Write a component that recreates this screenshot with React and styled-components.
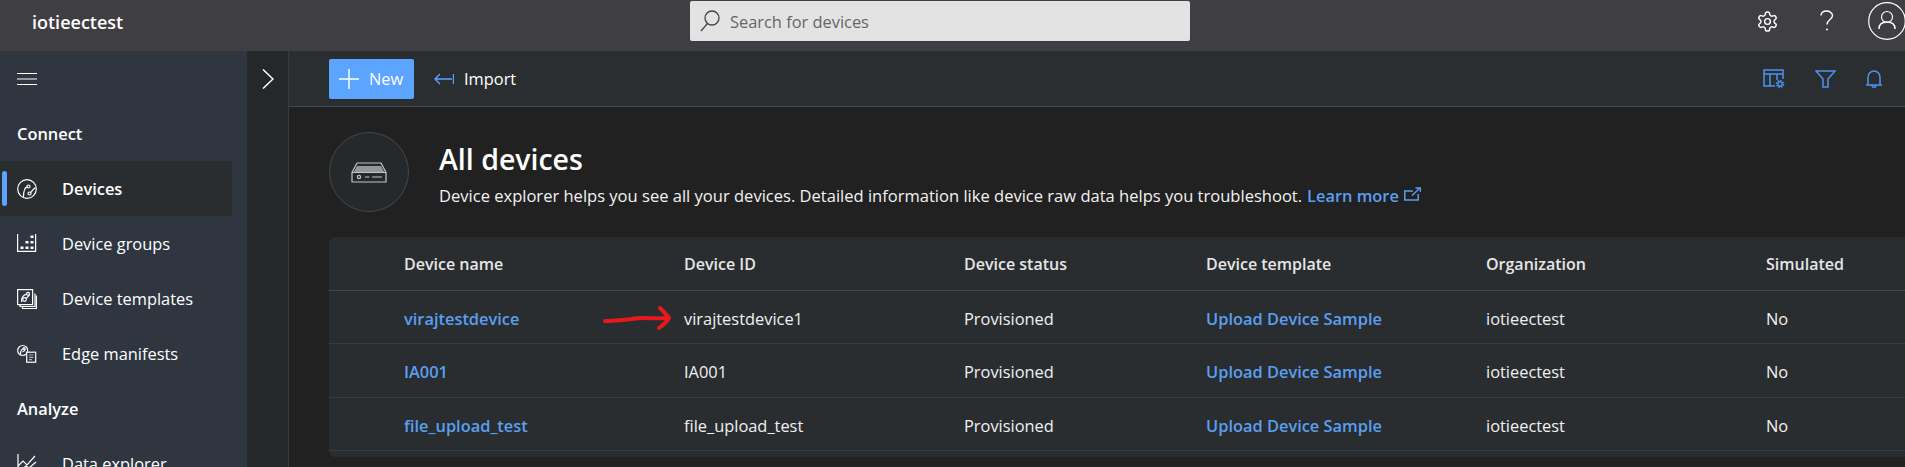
import styled, { createGlobalStyle } from "styled-components";

const GlobalStyle = createGlobalStyle`
  html, body {
    margin: 0;
    padding: 0;
    background: #212121;
  }
  * {
    box-sizing: border-box;
  }
`;

const Page = styled.div`
  width: 1905px;
  height: 467px;
  overflow: hidden;
  display: grid;
  grid-template-rows: 51px 1fr;
  font-family: "Open Sans", "Liberation Sans", sans-serif;
  font-size: 16.4px;
  color: #f2f2f2;
`;

const TopBar = styled.header`
  display: grid;
  grid-template-columns: 690px 500px 1fr;
  align-items: start;
  background: #3f3e43;
`;

const Brand = styled.div`
  padding: 10px 0 0 32px;
  font-size: 18px;
  line-height: 24px;
  font-weight: 600;
  color: #fff;
`;

const Search = styled.div`
  height: 40px;
  margin-top: 1px;
  display: flex;
  align-items: center;
  gap: 10px;
  padding-left: 10px;
  background: #e3e3e3;
  border-radius: 2px;
  color: #666;
`;

const TopIcons = styled.div`
  display: flex;
  align-items: center;
  justify-content: flex-end;
  height: 42px;
  margin-right: -12px;
`;

const TopIcon = styled.div`
  width: 60px;
  display: flex;
  justify-content: center;
  color: #fff;
`;

const Body = styled.div`
  display: grid;
  grid-template-columns: 248px 41px 1fr;
  min-height: 0;
`;

const Sidebar = styled.nav`
  background: #2f3640;
  border-right: 1px solid #24272a;
`;

const Burger = styled.div`
  height: 55px;
  padding-left: 17px;
  display: flex;
  align-items: center;
  color: #fff;
`;

const Section = styled.div`
  height: 55px;
  padding-left: 17px;
  display: flex;
  align-items: center;
  font-weight: 600;
  color: #fff;
`;

const NavItem = styled.div`
  position: relative;
  width: 232px;
  height: 55px;
  display: flex;
  align-items: center;
  gap: 25px;
  padding-left: 17px;
  background: ${(p) => (p.$active ? "#292d30" : "transparent")};
  color: #fff;
  font-weight: ${(p) => (p.$active ? 600 : 400)};
  white-space: nowrap;
  &::before {
    content: "";
    display: ${(p) => (p.$active ? "block" : "none")};
    position: absolute;
    left: 2px;
    top: 10px;
    width: 5px;
    height: 35px;
    border-radius: 3px;
    background: #5ba4ff;
  }
`;

const Strip = styled.div`
  background: #25282b;
  border-right: 1px solid #3a3d40;
  padding: 18px 0 0 14px;
  color: #fff;
`;

const Main = styled.main`
  min-width: 0;
  background: #212121;
`;

const Toolbar = styled.div`
  height: 56px;
  display: flex;
  align-items: center;
  padding: 0 23px 0 40px;
  background: #2a2e31;
  border-bottom: 1px solid #45484b;
`;

const NewButton = styled.div`
  width: 85px;
  height: 40px;
  display: flex;
  align-items: center;
  gap: 10px;
  padding-left: 10px;
  background: #5ba4ff;
  border-radius: 2px;
  color: #fff;
`;

const ToolAction = styled.div`
  display: flex;
  align-items: center;
  gap: 10px;
  margin-left: 20px;
  color: #fff;
`;

const ToolIcons = styled.div`
  margin-left: auto;
  display: flex;
  align-items: center;
  gap: 30px;
  color: #4d94f5;
`;

const Hero = styled.section`
  height: 130px;
  display: flex;
  gap: 30px;
  padding: 25px 0 0 40px;
`;

const HeroCircle = styled.div`
  width: 80px;
  height: 80px;
  flex: none;
  display: flex;
  align-items: center;
  justify-content: center;
  border-radius: 50%;
  border: 1px solid #45484b;
  background: #26292b;
  color: #c4c4c4;
`;

const HeroTitle = styled.h1`
  margin: 9px 0 0;
  font-size: 28.5px;
  line-height: 36px;
  font-weight: 600;
  color: #fff;
`;

const HeroText = styled.p`
  margin: 7px 0 0;
  font-size: 16.55px;
  line-height: 24px;
  color: #f2f2f2;
  white-space: nowrap;
`;

const Learn = styled.span`
  display: inline-flex;
  align-items: center;
  gap: 5px;
  margin-left: 5px;
  color: #5a9ff0;
  font-size: 16.4px;
  font-weight: 600;
  svg {
    margin-bottom: 5px;
  }
`;

const Card = styled.div`
  margin-left: 40px;
  height: 220px;
  background: #2a2d30;
  border-radius: 6px 0 0 6px;
  overflow: hidden;
`;

const Row = styled.div`
  display: grid;
  grid-template-columns: 280px 280px 242px 280px 280px 1fr;
  align-items: center;
  height: ${(p) => p.$h}px;
  padding-left: 75px;
  border-bottom: 1px solid ${(p) => (p.$head ? "#44474a" : "#383b3f")};
`;

const HeadCell = styled.div`
  font-size: 16px;
  font-weight: 600;
  color: #e6e6e6;
`;

const Cell = styled.div`
  position: relative;
  padding-top: 2px;
  color: #f0f0f0;
`;

const LinkCell = styled(Cell)`
  color: #5a9ff0;
  font-weight: 600;
`;

const ArrowMark = styled.svg`
  position: absolute;
  left: 198px;
  top: -12px;
`;

const line = {
  fill: "none",
  stroke: "currentColor",
  strokeWidth: 1.2,
};

const BurgerIcon = () => (
  <svg width="20" height="12" viewBox="0 0 20 12" fill="none" stroke="currentColor" strokeWidth="1">
    <path d="M0 .5h20M0 6h20M0 11.500h20" />
  </svg>
);

const DevicesIcon = () => (
  <svg width="20" height="20" viewBox="0 0 20 20" {...line}>
    <circle cx="10" cy="10" r="9.300" />
    <circle cx="11.500" cy="7.500" r="1.500" />
    <circle cx="12.500" cy="14.500" r="1.500" />
    <path d="M10.200 7.800C7.500 8.500 6.500 11 6.500 18M13.700 13.500c1.300-1.500 2.300-3.500 5-5" />
  </svg>
);

const GroupsIcon = () => (
  <svg width="20" height="20" viewBox="0 0 20 20" {...line}>
    <path d="M.6 0v17.400h18V0" />
    <path d="M13.500 1.500h3v2.500h-3zM8.500 7h3v2.500h-3zM13.500 7h3v2.500h-3zM3.500 12.500h3V15h-3zM8.500 12.500h3V15h-3zM13.500 12.500h3V15h-3z" fill="currentColor" stroke="none" />
  </svg>
);

const TemplatesIcon = () => (
  <svg width="20" height="20" viewBox="0 0 20 20" {...line}>
    <rect x=".6" y=".6" width="15" height="15" />
    <circle cx="11" cy="4.800" r="1.500" />
    <circle cx="7.500" cy="10.500" r="1.800" />
    <path d="M9.700 5.200C6 6 4.500 8 4.500 13M9 9.500c1.500-1 2-2 3.500-3.500M3 15.500v2h15v-13M5.500 17.800v1.700h14v-13" />
  </svg>
);

const ManifestIcon = () => (
  <svg width="20" height="20" viewBox="0 0 20 20" {...line}>
    <circle cx="5.700" cy="6.500" r="5" />
    <circle cx="7" cy="4.500" r="1" />
    <path d="M6.200 5C4 5.500 3.500 7 3.500 10M5.500 8c1-.5 2-1 3-2.500" />
    <rect x="9.700" y="8.200" width="9" height="10" fill="#2f3640" />
    <path d="M12 11h4.500M12 13.300h4.500M12 15.600h3" stroke="#aaa" />
  </svg>
);

const ChartIcon = () => (
  <svg width="20" height="20" viewBox="0 0 20 20" {...line}>
    <path d="M1 0v19h18" />
    <path d="M1 12l5-5 4 4 8-9M4 16l5-4 3 2 7-6" />
  </svg>
);

const SearchIcon = () => (
  <svg width="20" height="22" viewBox="0 0 20 22" fill="none" stroke="#444" strokeWidth="1.300">
    <circle cx="12" cy="8" r="7" />
    <path d="M7.500 13.500L1 21" />
  </svg>
);

const GearIcon = () => (
  <svg width="23" height="23" viewBox="0 0 24 24" fill="none" stroke="currentColor" strokeWidth="1.500">
    <path d="M12.220 2h-.44a2 2 0 0 0-2 2v.18a2 2 0 0 1-1 1.730l-.43.25a2 2 0 0 1-2 0l-.15-.08a2 2 0 0 0-2.730.73l-.22.380a2 2 0 0 0 .73 2.730l.15.100a2 2 0 0 1 1 1.720v.510a2 2 0 0 1-1 1.740l-.15.090a2 2 0 0 0-.73 2.730l.22.380a2 2 0 0 0 2.730.73l.15-.08a2 2 0 0 1 2 0l.43.250a2 2 0 0 1 1 1.730V20a2 2 0 0 0 2 2h.44a2 2 0 0 0 2-2v-.18a2 2 0 0 1 1-1.730l.43-.25a2 2 0 0 1 2 0l.15.080a2 2 0 0 0 2.730-.73l.22-.390a2 2 0 0 0-.73-2.730l-.15-.080a2 2 0 0 1-1-1.740v-.500a2 2 0 0 1 1-1.740l.15-.090a2 2 0 0 0 .73-2.730l-.22-.380a2 2 0 0 0-2.730-.73l-.15.080a2 2 0 0 1-2 0l-.43-.250a2 2 0 0 1-1-1.730V4a2 2 0 0 0-2-2z" />
    <circle cx="12" cy="12" r="3" />
  </svg>
);

const HelpIcon = () => (
  <svg width="14" height="22" viewBox="0 0 14 22" fill="none" stroke="currentColor" strokeWidth="1.400">
    <path d="M1 5.500C1 2.500 3.500 1 6.500 1S12.500 3 12.500 5.500c0 4-5.500 4-5.500 9" />
    <circle cx="7" cy="19.500" r="1" fill="currentColor" stroke="none" />
  </svg>
);

const AvatarIcon = () => (
  <svg width="38" height="38" viewBox="0 0 38 38" fill="none" stroke="currentColor" strokeWidth="1.200">
    <circle cx="19" cy="19" r="18.300" />
    <circle cx="19" cy="15" r="5.500" />
    <path d="M11 27c0-5 3.500-7 8-7s8 2 8 7" strokeWidth="1.500" />
  </svg>
);

const ChevronIcon = () => (
  <svg width="12" height="20" viewBox="0 0 12 20" {...line}>
    <path d="M1 .5l10 9.500L1 19.500" strokeWidth="1.500" />
  </svg>
);

const PlusIcon = () => (
  <svg width="20" height="20" viewBox="0 0 20 20" {...line}>
    <path d="M10 0v20M0 10h20" strokeWidth="1.500" />
  </svg>
);

const ImportIcon = () => (
  <svg width="20" height="12" viewBox="0 0 20 12" fill="none" stroke="#5ba4ff" strokeWidth="1.300">
    <path d="M6 1L1 6l5 5M1 6h17M19.500 1v10" />
  </svg>
);

const ExternalIcon = () => (
  <svg width="17" height="14" viewBox="0 0 17 14" fill="none" stroke="currentColor" strokeWidth="1.500">
    <path d="M9 4H.8v9h13.400V7M8 8.500L15.500 1.500M11.500 1h5v4" />
  </svg>
);

const ColumnsIcon = () => (
  <svg width="22" height="20" viewBox="0 0 22 20" fill="none" stroke="currentColor" strokeWidth="1.500">
    <path d="M20 10V1H1v16h11" />
    <path d="M1 5h19M7 5v12M14 5v6" />
    <circle cx="17" cy="15" r="2.200" strokeWidth="1.500" />
    <circle cx="17" cy="15" r="3.700" strokeWidth="1.200" strokeDasharray="1.500 1.400" />
  </svg>
);

const FunnelIcon = () => (
  <svg width="21" height="18" viewBox="0 0 21 18" fill="none" stroke="currentColor" strokeWidth="1.500">
    <path d="M1 1h19l-7 8v8H8V9z" />
  </svg>
);

const BellIcon = () => (
  <svg width="16" height="18" viewBox="0 0 16 18" fill="none" stroke="currentColor" strokeWidth="1.500">
    <path d="M0 15h16M2 15V7a6 6 0 0 1 12 0v8M6 15c0 3 4 3 4 0" />
  </svg>
);

const DriveIcon = () => (
  <svg width="36" height="21" viewBox="0 0 36 21" fill="none" stroke="currentColor" strokeWidth="1.200">
    <path d="M6 1h24l5 9.500V20H1v-9.500z" />
    <path d="M1 10.500h34" />
    <path d="M6 4h24l3.500 6.500h-31z" fill="currentColor" stroke="none" opacity="0.700" />
    <circle cx="8" cy="15" r="1.600" />
    <path d="M14 15h4.500M21 15h10" />
  </svg>
);

const navItems = [
  { label: "Devices", icon: <DevicesIcon />, active: true },
  { label: "Device groups", icon: <GroupsIcon /> },
  { label: "Device templates", icon: <TemplatesIcon /> },
  { label: "Edge manifests", icon: <ManifestIcon /> },
];

const columns = [
  "Device name",
  "Device ID",
  "Device status",
  "Device template",
  "Organization",
  "Simulated",
];

const devices = [
  { name: "virajtestdevice", id: "virajtestdevice1", h: 53, marked: true },
  { name: "IA001", id: "IA001", h: 54 },
  { name: "file_upload_test", id: "file_upload_test", h: 53 },
];

const App = () => {
  return (
    <>
      <GlobalStyle />
      <Page>
        <TopBar>
          <Brand>iotieectest</Brand>
          <Search>
            <SearchIcon />
            Search for devices
          </Search>
          <TopIcons>
            <TopIcon><GearIcon /></TopIcon>
            <TopIcon><HelpIcon /></TopIcon>
            <TopIcon><AvatarIcon /></TopIcon>
          </TopIcons>
        </TopBar>
        <Body>
          <Sidebar>
            <Burger><BurgerIcon /></Burger>
            <Section>Connect</Section>
            {navItems.map((item) => (
              <NavItem key={item.label} $active={item.active}>
                {item.icon}
                {item.label}
              </NavItem>
            ))}
            <Section>Analyze</Section>
            <NavItem>
              <ChartIcon />
              Data explorer
            </NavItem>
          </Sidebar>
          <Strip><ChevronIcon /></Strip>
          <Main>
            <Toolbar>
              <NewButton>
                <PlusIcon />
                New
              </NewButton>
              <ToolAction>
                <ImportIcon />
                Import
              </ToolAction>
              <ToolIcons>
                <ColumnsIcon />
                <FunnelIcon />
                <BellIcon />
              </ToolIcons>
            </Toolbar>
            <Hero>
              <HeroCircle><DriveIcon /></HeroCircle>
              <div>
                <HeroTitle>All devices</HeroTitle>
                <HeroText>
                  Device explorer helps you see all your devices. Detailed information like device raw data helps you troubleshoot.
                  <Learn>Learn more<ExternalIcon /></Learn>
                </HeroText>
              </div>
            </Hero>
            <Card>
              <Row $head $h={54}>
                {columns.map((c) => (
                  <HeadCell key={c}>{c}</HeadCell>
                ))}
              </Row>
              {devices.map((d) => (
                <Row key={d.name} $h={d.h}>
                  <LinkCell>
                    {d.name}
                    {d.marked && (
                      <ArrowMark width="70" height="44" viewBox="0 0 70 44" fill="none" stroke="#e8191c" strokeWidth="4" strokeLinecap="round" strokeLinejoin="round">
                        <path d="M3 28c10 0 18-1 27-2 12-2 24 0 37-1M58 15c3 3 6 6 9 10-2 4-6 7-10 10" />
                      </ArrowMark>
                    )}
                  </LinkCell>
                  <Cell>{d.id}</Cell>
                  <Cell>Provisioned</Cell>
                  <LinkCell>Upload Device Sample</LinkCell>
                  <Cell>iotieectest</Cell>
                  <Cell>No</Cell>
                </Row>
              ))}
            </Card>
          </Main>
        </Body>
      </Page>
    </>
  );
};

export default App;
